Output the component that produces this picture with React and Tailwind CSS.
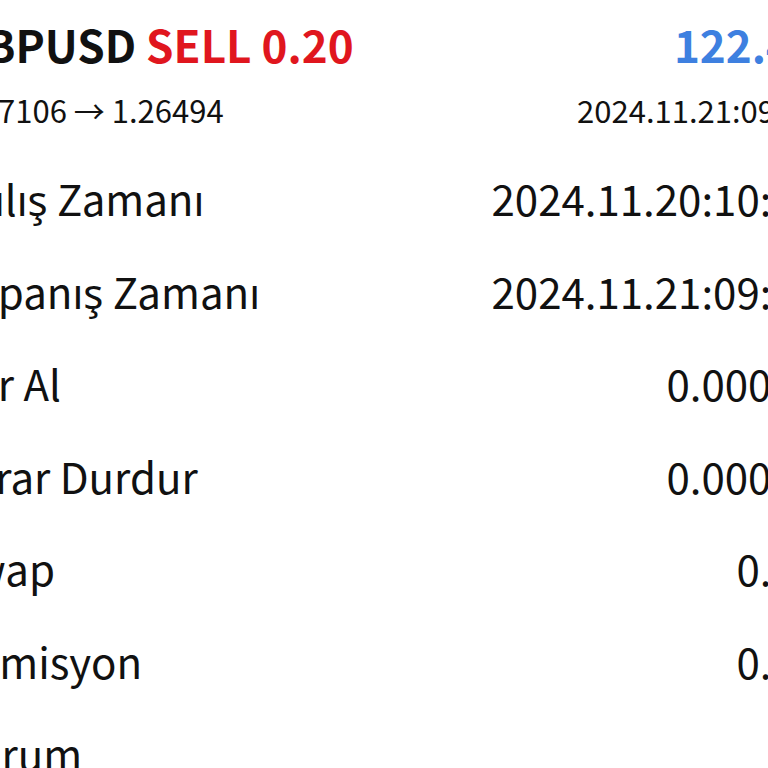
import React from "react";

const rows = [
  { label: "Açılış Zamanı", value: "2024.11.20:10:15" },
  { label: "Kapanış Zamanı", value: "2024.11.21:09:42" },
  { label: "Kar Al", value: "0.00000" },
  { label: "Zarar Durdur", value: "0.00000" },
  { label: "Swap", value: "0.00" },
  { label: "Komisyon", value: "0.00" },
  { label: "Durum", value: "" },
];

const font = { fontFamily: '"Noto Sans CJK SC", "Noto Sans", sans-serif' };

export default function App() {
  return (
    <div className="w-[768px] h-[768px] overflow-hidden bg-white text-[#111111]" style={font}>
      <div className="ml-[-53px] w-[871px]">
        {/* header */}
        <div className="flex justify-between items-center h-[87px] pl-[7px]">
          <div className="text-[44px] font-bold leading-none">
            GBPUSD <span className="text-[#e0161e]">SELL 0.20</span>
          </div>
          <div className="text-[44px] font-bold leading-none text-[#3e80e0]">122.40</div>
        </div>
        <div className="flex justify-between items-center h-[44px] pl-[8px] text-[31px] leading-none">
          <div>1.27106 → 1.26494</div>
          <div>2024.11.21:09:42</div>
        </div>

        {/* details */}
        <div className="mt-[21px]">
          {rows.map((r) => (
            <div key={r.label} className="flex justify-between items-center h-[92.5px] text-[42px] leading-none">
              <div>{r.label}</div>
              <div>{r.value}</div>
            </div>
          ))}
        </div>
      </div>
    </div>
  );
}
